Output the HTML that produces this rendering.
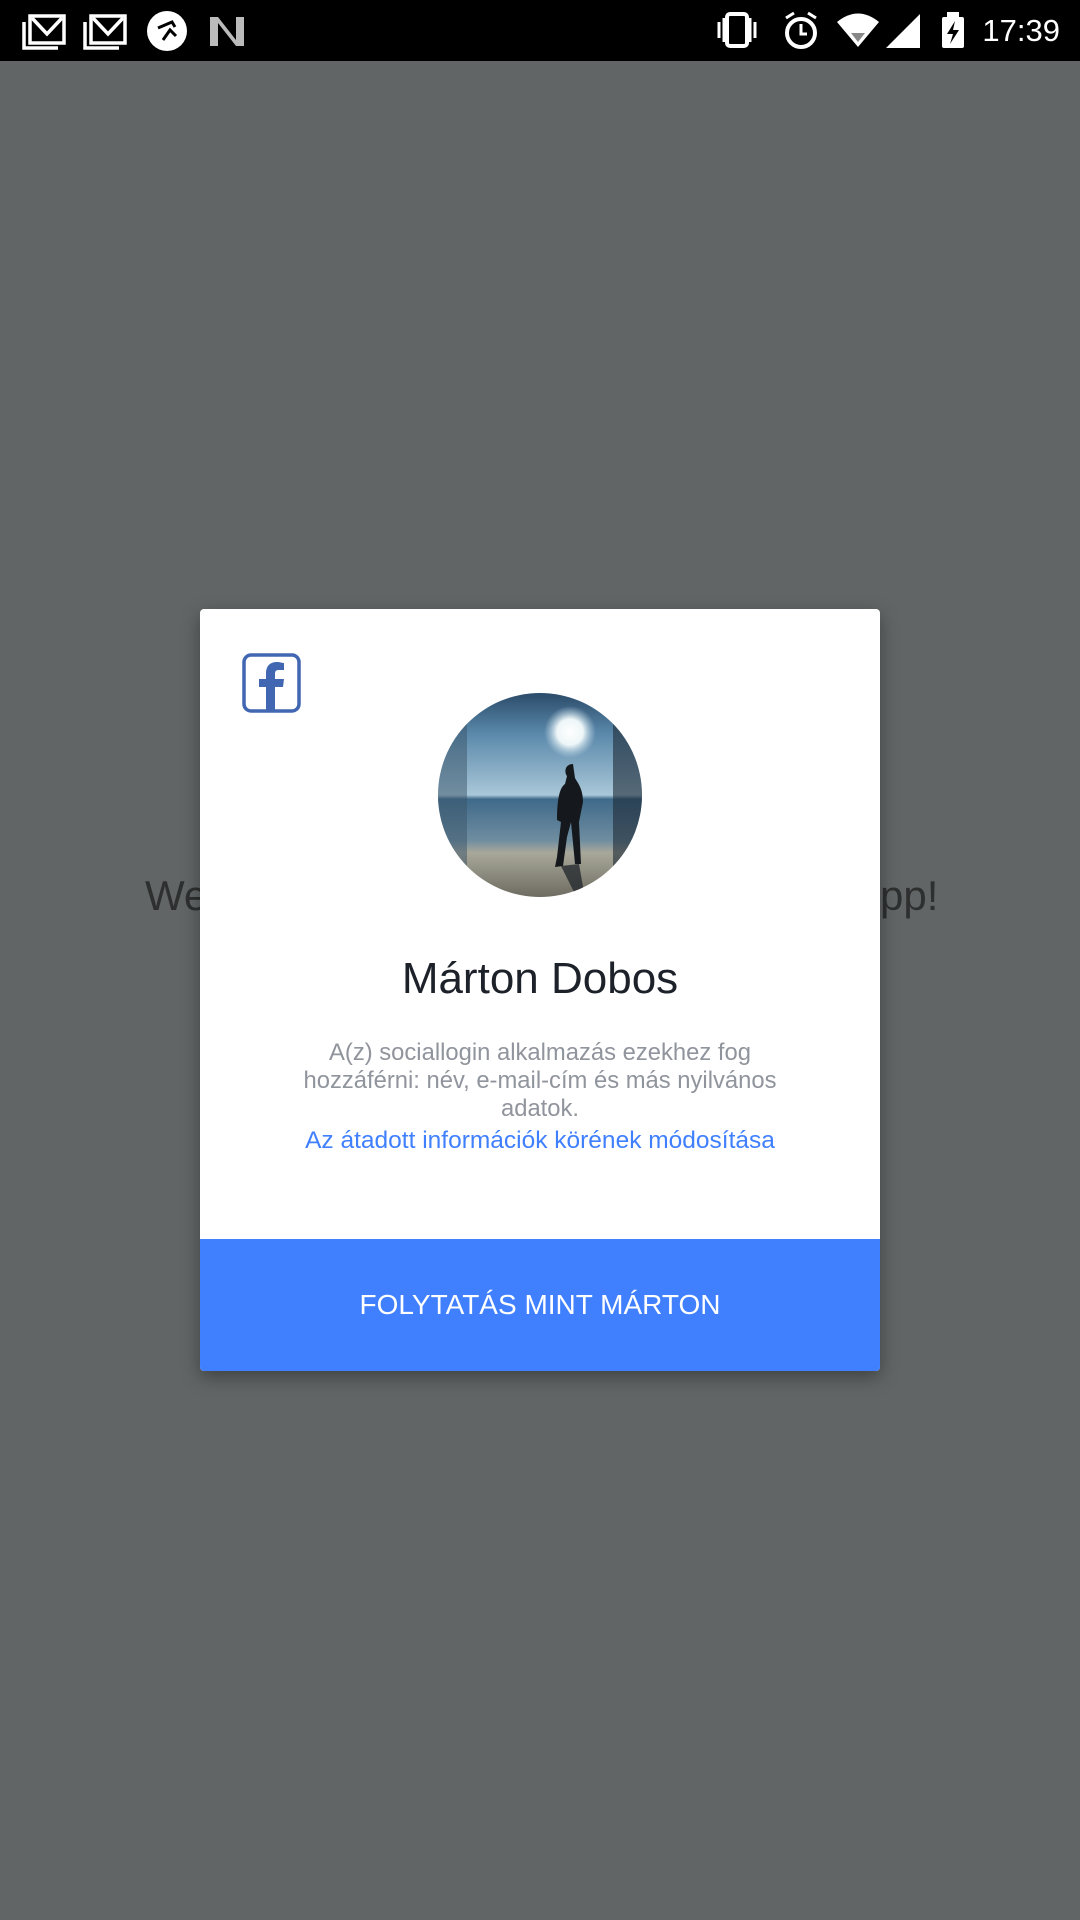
<!DOCTYPE html>
<html><head><meta charset="utf-8"><style>
*{margin:0;padding:0;box-sizing:border-box}
body{width:1080px;height:1920px;background:#616566;font-family:"Liberation Sans",sans-serif;position:relative;overflow:hidden}
.sb{position:absolute;left:0;top:0;width:1080px;height:61px;background:#000}
.t{position:absolute;color:#fff;font-size:31px;top:13px;right:20px}
.bg{position:absolute;top:872px;font-size:42px;color:#2e3030}
.dlg{position:absolute;left:200px;top:609px;width:680px;height:762px;background:#fff;border-radius:4px;box-shadow:0 6px 18px rgba(0,0,0,.35);overflow:hidden}
.name{position:absolute;top:345px;width:100%;text-align:center;font-size:44px;color:#1d2129}
.desc{position:absolute;top:430px;left:90px;width:500px;text-align:center;font-size:23.8px;line-height:28px;color:#90949c}
.link{position:absolute;top:518px;width:100%;text-align:center;font-size:24.5px;color:#4080ff}
.btn{position:absolute;left:0;top:630px;width:680px;height:132px;background:#4080ff;color:#fff;font-size:28px;text-align:center;line-height:132px;letter-spacing:0}
</style></head><body>
<div class="sb">
<svg width="1080" height="61" style="position:absolute;left:0;top:0">
<g fill="none" stroke="#fff" stroke-width="3.5">
<rect x="30" y="16" width="34" height="27"/><path d="M32 18 L47 34 L62 18" /><path d="M24 22 V48 H58"/>
<rect x="91" y="16" width="34" height="27"/><path d="M93 18 L108 34 L123 18"/><path d="M85 22 V48 H119"/>
</g>
<circle cx="167" cy="31" r="20" fill="#fff"/>
<path d="M158 28 L172 22 L175 27 M163 40 L170 30 L176 36" stroke="#000" stroke-width="3" fill="none"/>
<path d="M210 17 L218 17 L236 40 L236 17 L244 17 L244 46 L236 46 L218 23 L218 46 L210 46 Z" fill="#bbb"/>
<rect x="727" y="14" width="20" height="32" rx="3" fill="none" stroke="#fff" stroke-width="4"/>
<path d="M719 22v16M755 22v16M724 18v24M750 18v24" stroke="#fff" stroke-width="3"/>
<circle cx="801" cy="33" r="14" fill="none" stroke="#fff" stroke-width="4"/>
<path d="M801 24v10h6M786 18l8-5M816 18l-8-5" stroke="#fff" stroke-width="3" fill="none"/>
<path d="M837 22 Q858 5 879 22 L858 47 Z" fill="#fff"/>
<path d="M851 33 L865 33 L858 42Z" fill="#888"/>
<path d="M886 48 L920 14 L920 48 Z" fill="#fff"/>
<rect x="942" y="17" width="22" height="31" rx="2" fill="#fff"/><rect x="947" y="12" width="12" height="6" fill="#fff"/>
<path d="M955 21 L947 34 L953 34 L950 44 L959 30 L953 30Z" fill="#000"/>
</svg>
<div class="t">17:39</div>
</div>
<div class="bg" style="left:145px">We</div>
<div class="bg" style="left:880px">pp!</div>
<div class="dlg">
<svg width="60" height="60" style="position:absolute;left:42px;top:44px" viewBox="0 0 60 60">
<rect x="2" y="2" width="55" height="56" rx="7" fill="none" stroke="#4267b2" stroke-width="3.5"/>
<path d="M33 58 V34 H41 L42 26 H33 V21 C33 18 34 17 37 17 H42 V10 C40 10 38 9 35 9 C28 9 24 13 24 20 V26 H17 V34 H24 V58Z" fill="#4267b2"/>
</svg>
<svg width="206" height="206" style="position:absolute;left:237px;top:83px" viewBox="0 0 206 206">
<defs>
<clipPath id="c"><circle cx="103" cy="103" r="102"/></clipPath>
<linearGradient id="sky" x1="0" y1="0" x2="0" y2="1">
<stop offset="0" stop-color="#2a4a68"/><stop offset=".2" stop-color="#5a88aa"/><stop offset=".5" stop-color="#a9c7d8"/>
<stop offset=".52" stop-color="#3f6a8a"/><stop offset=".72" stop-color="#6f8da0"/><stop offset=".78" stop-color="#a8a89a"/><stop offset="1" stop-color="#6d6a60"/>
</linearGradient>
<radialGradient id="sun" cx=".5" cy=".5" r=".5"><stop offset="0" stop-color="#fff"/><stop offset=".5" stop-color="#eef6f8"/><stop offset="1" stop-color="#bcd6e4" stop-opacity="0"/></radialGradient>
</defs>
<g clip-path="url(#c)">
<rect width="206" height="206" fill="url(#sky)"/>
<circle cx="133" cy="40" r="26" fill="url(#sun)"/>
<rect x="0" y="0" width="30" height="206" fill="#3a5468" opacity=".5"/>
<rect x="176" y="0" width="30" height="206" fill="#1e2a36" opacity=".6"/>
<path d="M136 72 C128 72 127 80 130 84 L128 92 C122 96 120 110 120 128 L124 130 L120 165 L118 175 L126 174 L130 145 L134 130 L138 172 L144 172 L142 130 L146 110 C146 96 140 90 138 86 Z" fill="#15191e"/>
<path d="M124 174 L140 206 L148 206 L142 172Z" fill="#252a30" opacity=".8"/>
</g>
</svg>
<div class="name">Márton Dobos</div>
<div class="desc">A(z) sociallogin alkalmazás ezekhez fog hozzáférni: név, e-mail-cím és más nyilvános adatok.</div>
<div class="link">Az átadott információk körének módosítása</div>
<div class="btn">FOLYTATÁS MINT MÁRTON</div>
</div>
</body></html>
